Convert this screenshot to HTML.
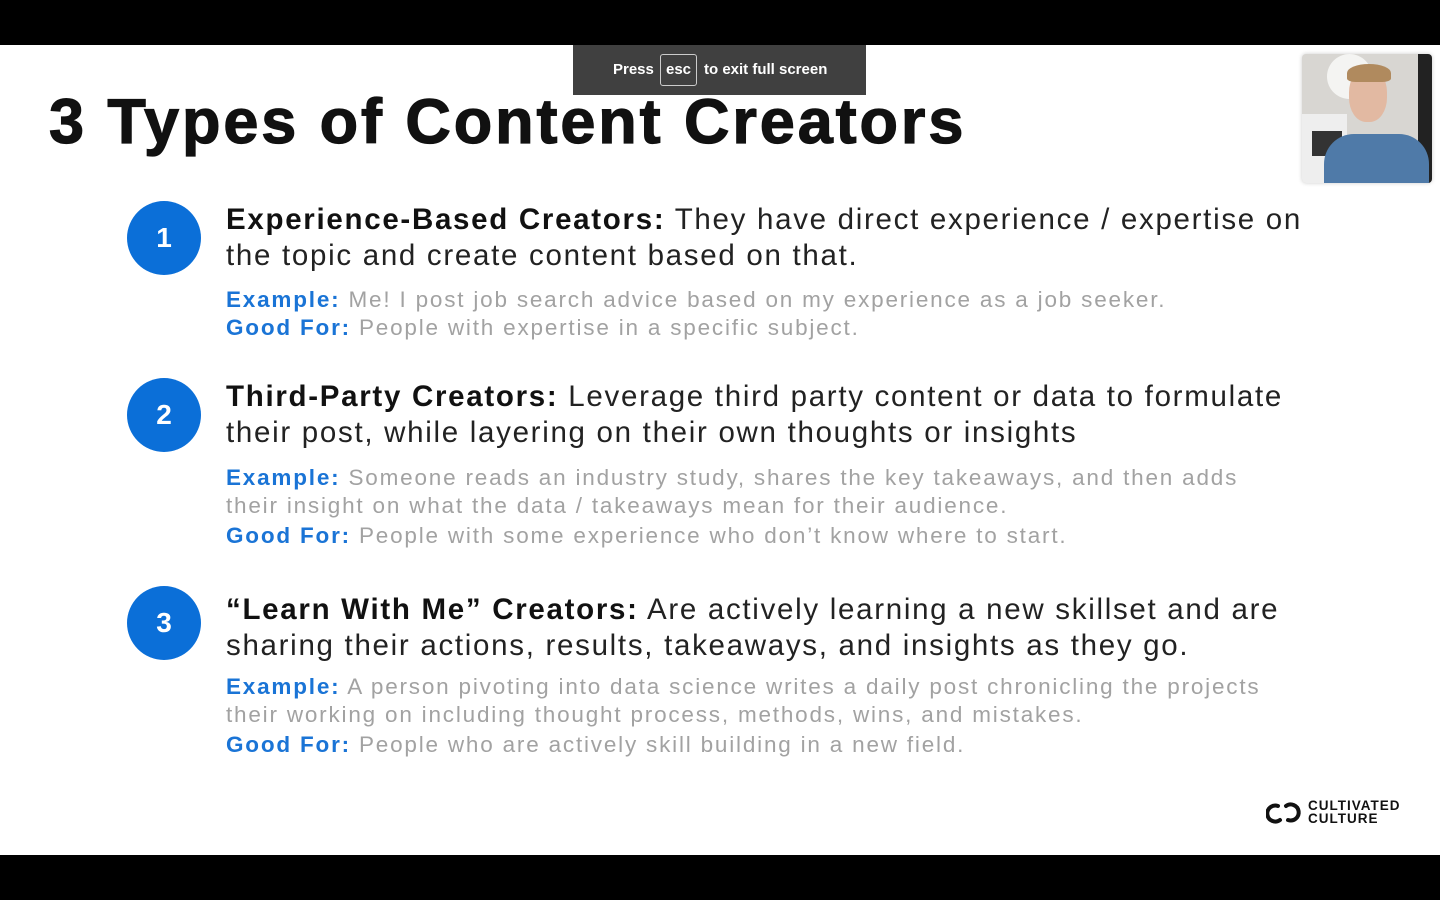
<!DOCTYPE html>
<html><head><meta charset="utf-8"><style>
body{margin:0;width:1440px;height:900px;background:#fff;position:relative;overflow:hidden;font-family:"Liberation Sans",sans-serif}
.bar{position:absolute;left:0;width:1440px;background:#000}
.title{position:absolute;left:49px;top:86px;font-size:63px;font-weight:bold;color:#111;letter-spacing:2.9px;white-space:nowrap;-webkit-text-stroke:1.2px #111}
.c{position:absolute;left:127px;width:74px;height:74px;border-radius:50%;background:#0b6fd8;color:#fff;font-weight:bold;font-size:28px;text-align:center;line-height:74px}
.h{position:absolute;left:226px;font-size:29.5px;line-height:36px;color:#222;letter-spacing:1.7px;white-space:nowrap}
.h b{color:#111}
.s{position:absolute;left:226px;font-size:22.5px;line-height:28px;color:#a2a2a2;letter-spacing:1.8px;white-space:nowrap}
.s b{color:#1a74d6}
</style></head><body>
<div class="bar" style="top:0;height:45px"></div>
<div class="bar" style="top:855px;height:45px"></div>
<div class="title">3 Types of Content Creators</div>

<div class="c" style="top:201px">1</div>
<div class="h" style="top:202px"><b>Experience-Based Creators:</b> They have direct experience / expertise on<br>the topic and create content based on that.</div>
<div class="s" style="top:286px"><b>Example:</b> Me! I post job search advice based on my experience as a job seeker.<br><b>Good For:</b> People with expertise in a specific subject.</div>

<div class="c" style="top:378px">2</div>
<div class="h" style="top:379px"><b>Third-Party Creators:</b> Leverage third party content or data to formulate<br>their post, while layering on their own thoughts or insights</div>
<div class="s" style="top:464px"><b>Example:</b> Someone reads an industry study, shares the key takeaways, and then adds<br>their insight on what the data / takeaways mean for their audience.</div>
<div class="s" style="top:522px"><b>Good For:</b> People with some experience who don’t know where to start.</div>

<div class="c" style="top:586px">3</div>
<div class="h" style="top:592px"><b>“Learn With Me” Creators:</b> Are actively learning a new skillset and are<br>sharing their actions, results, takeaways, and insights as they go.</div>
<div class="s" style="top:673px"><b>Example:</b> A person pivoting into data science writes a daily post chronicling the projects<br>their working on including thought process, methods, wins, and mistakes.</div>
<div class="s" style="top:731px"><b>Good For:</b> People who are actively skill building in a new field.</div>

<svg style="position:absolute;left:1266px;top:800px" width="36" height="26" viewBox="0 0 36 26"><path d="M12 6 A8 8 0 1 0 14 20" fill="none" stroke="#111" stroke-width="4" stroke-linecap="round"/><path d="M22 20 A8 8 0 1 0 20 6" fill="none" stroke="#111" stroke-width="4" stroke-linecap="round"/></svg>
<div style="position:absolute;left:1308px;top:800px;font-size:13.5px;font-weight:bold;line-height:12.5px;color:#111;letter-spacing:1px">CULTIVATED<br>CULTURE</div>

<div style="position:absolute;left:1302px;top:54px;width:130px;height:129px;border-radius:4px;overflow:hidden;background:#d8d6d2;box-shadow:0 0 4px rgba(0,0,0,.2)">
<div style="position:absolute;left:25px;top:0;width:45px;height:45px;border-radius:50%;background:#f4f4f2"></div>
<div style="position:absolute;left:0;top:60px;width:45px;height:70px;background:#eee"></div>
<div style="position:absolute;left:10px;top:77px;width:30px;height:25px;background:#333"></div>
<div style="position:absolute;right:0;top:0;width:14px;height:129px;background:#222"></div>
<div style="position:absolute;left:22px;top:80px;width:105px;height:60px;border-radius:30px 30px 0 0;background:#4f7aa8"></div>
<div style="position:absolute;left:47px;top:14px;width:38px;height:54px;border-radius:45%;background:#e2b9a2"></div>
<div style="position:absolute;left:45px;top:10px;width:44px;height:18px;border-radius:50% 50% 20% 20%;background:#b08a5e"></div>
</div>

<div style="position:absolute;left:573px;top:45px;width:293px;height:50px;background:#404040;color:#fff;font-size:15px;font-weight:bold">
<span style="position:absolute;left:40px;top:16px">Press</span>
<span style="position:absolute;left:87px;top:9px;width:37px;height:32px;border:1px solid #ccc;border-radius:3px;box-sizing:border-box;text-align:center;line-height:30px">esc</span>
<span style="position:absolute;left:131px;top:16px">to exit full screen</span>
</div>
</body></html>
